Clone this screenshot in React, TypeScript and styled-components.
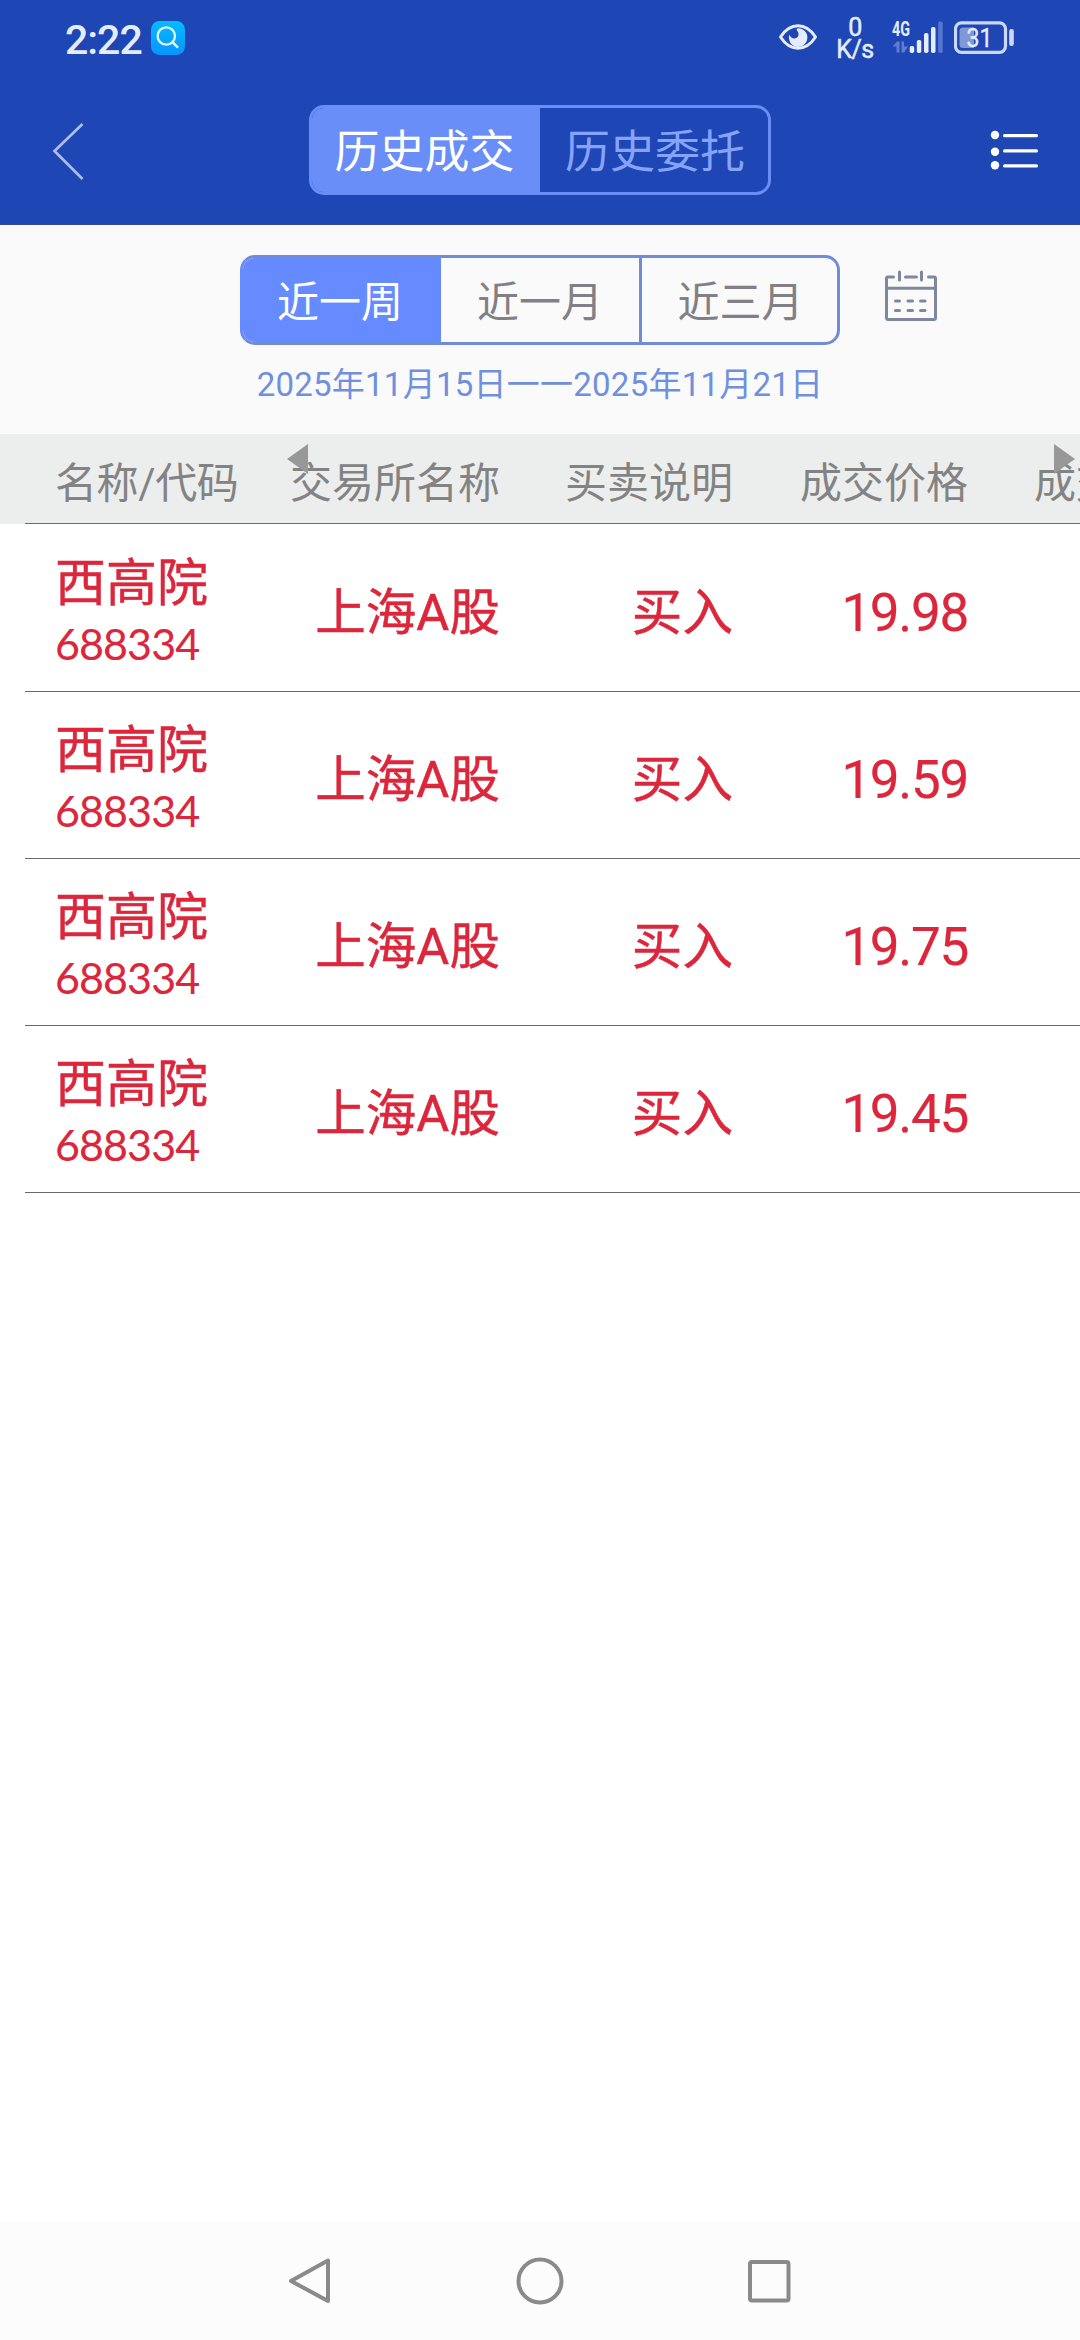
import React from "react";
import styled, { createGlobalStyle } from "styled-components";

const GlobalStyle = createGlobalStyle`
  *, *::before, *::after { box-sizing: border-box; }
  body {
    margin: 0;
    background: #fff;
    font-family: Roboto, "Noto Sans CJK SC", sans-serif;
  }
  button {
    margin: 0;
    padding: 0;
    border: 0;
    background: none;
    font: inherit;
  }
  svg { display: block; flex: none; }
`;

const Screen = styled.div`
  display: flex;
  flex-direction: column;
  width: 1080px;
  height: 2340px;
  overflow: hidden;
  background: #fff;
`;

const Top = styled.header`
  flex: none;
  height: 225px;
  background: #1e46b4;
  border-bottom: 1px solid #34499a;
`;

const StatusBar = styled.div`
  display: flex;
  justify-content: space-between;
  height: 75px;
  padding: 0 65px 0 65px;
  color: #e4ecfd;
`;

const StatusLeft = styled.div`
  display: flex;
  align-items: center;
  gap: 9px;
  padding-top: 1px;
`;

const Clock = styled.span`
  width: 77px;
  font-size: 41px;
  font-weight: 500;
  line-height: 48px;
  letter-spacing: -1px;
  padding-top: 3px;
  white-space: nowrap;
`;

const StatusRight = styled.div`
  display: flex;
  align-items: flex-start;
`;

const NetSpeed = styled.div`
  display: flex;
  flex-direction: column;
  align-items: center;
  width: 38px;
  margin: 17px 17px 0 18px;
  font-size: 25px;
  line-height: 22px;
  letter-spacing: -0.4px;
  -webkit-text-stroke: 0.5px #e4ecfd;
`;

const TitleBar = styled.div`
  display: flex;
  align-items: center;
  justify-content: space-between;
  height: 149px;
  padding: 1px 40px 0 52px;
`;

const BarIcon = styled.span`
  padding-top: 2px;
`;

const ModeSwitch = styled.div`
  display: grid;
  grid-template-columns: 228px 228px;
  width: 462px;
  height: 90px;
  margin-left: 4px;
  border: 3px solid #6a8ef7;
  border-radius: 15px;
  overflow: hidden;
`;

const Mode = styled.button<{ $active?: boolean }>`
  padding: ${(p) => (p.$active ? "0 3px 0 0" : "0 0 0 2px")};
  height: 84px;
  font-size: 45px;
  line-height: 90px;
  color: ${(p) => (p.$active ? "#fff" : "#86a3fb")};
  background: ${(p) => (p.$active ? "#6a8ef7" : "transparent")};
`;

const Filter = styled.section`
  display: flex;
  flex-direction: column;
  flex: none;
  height: 209px;
  padding-top: 30px;
  background: #fafafb;
`;

const FilterRow = styled.div`
  display: flex;
  align-items: flex-start;
  gap: 44px;
  padding-left: 240px;
`;

const Periods = styled.div`
  display: grid;
  grid-template-columns: repeat(3, 198px);
  width: 600px;
  height: 90px;
  border: 3px solid #708bd8;
  border-left-color: #668aff;
  border-radius: 15px;
  overflow: hidden;
`;

const Period = styled.button<{ $active?: boolean; $divider?: boolean }>`
  padding-right: ${(p) => (p.$active ? 4 : 0)}px;
  padding-left: ${(p) => (p.$divider ? 2 : 0)}px;
  font-size: 42px;
  line-height: 90px;
  height: 84px;
  color: ${(p) => (p.$active ? "#fff" : "#828084")};
  background: ${(p) => (p.$active ? "#668aff" : "transparent")};
  border-left: ${(p) => (p.$divider ? "3px solid #708bd8" : "0")};
`;

const CalendarSlot = styled.div`
  padding-top: 14px;
`;

const DateRange = styled.p`
  margin: 15px 0 0;
  font-size: 33px;
  line-height: 50px;
  letter-spacing: 0.25px;
  text-align: center;
  color: #7090de;
`;

const HeaderRow = styled.div`
  position: relative;
  display: grid;
  grid-template-columns: 200px 245px 233px 235px 1fr;
  flex: none;
  height: 90px;
  padding: 5px 0 0 55px;
  font-size: 42px;
  line-height: 90px;
  color: #838383;
  background: #eceeed;
  white-space: nowrap;
  overflow: hidden;
`;

const HeaderCell = styled.span<{ $right?: boolean }>`
  height: 85px;
  letter-spacing: ${(p) => (p.$right ? 0 : -0.4)}px;
  text-align: ${(p) => (p.$right ? "right" : "left")};
`;

const NextHeaderCell = styled(HeaderCell)`
  padding-left: 66px;
`;

const ScrollHint = styled.svg<{ $left: number }>`
  position: absolute;
  top: 10px;
  left: ${(p) => p.$left}px;
`;

const List = styled.main`
  position: relative;
  flex: 1;
  margin: -1px 0 0 25px;
  border-top: 1px solid #6c696e;
`;

const Row = styled.div<{ $first?: boolean }>`
  display: grid;
  grid-template-columns: 215px 230px 233px 235px;
  align-items: center;
  height: ${(p) => (p.$first ? 168 : 167)}px;
  padding-left: 30px;
  border-bottom: 1px solid #6c696e;
  color: #dc263b;
  -webkit-text-stroke: 0.5px #dc263b;
`;

const Security = styled.div`
  display: flex;
  flex-direction: column;
  padding-top: 9px;
`;

const Name = styled.span`
  font-size: 51px;
  line-height: 64px;
`;

const Code = styled.span`
  margin-top: -1px;
  font-family: Lato, Roboto, sans-serif;
  font-size: 43px;
  line-height: 58px;
  letter-spacing: -0.9px;
  -webkit-text-stroke-width: 0.1px;
`;

const Cell = styled.span<{ $price?: boolean }>`
  font-size: ${(p) => (p.$price ? 53 : 50.5)}px;
  line-height: 64px;
  letter-spacing: ${(p) => (p.$price ? -1.3 : 0.1)}px;
  padding-top: 10px;
  text-align: right;
  -webkit-text-stroke-width: ${(p) => (p.$price ? 0.2 : 0.5)}px;
`;

const NavBar = styled.nav`
  display: flex;
  align-items: center;
  justify-content: center;
  gap: 180px;
  flex: none;
  height: 118px;
  background: #fcfcfc;
`;

const SearchBadge = () => (
  <svg width="34" height="34" viewBox="0 0 34 34" fill="none">
    <defs>
      <linearGradient id="badge" x1="0" y1="0" x2="0" y2="1">
        <stop offset="0" stopColor="#05baff" />
        <stop offset="1" stopColor="#0895ff" />
      </linearGradient>
    </defs>
    <rect width="34" height="34" rx="8.5" fill="url(#badge)" />
    <circle cx="15.3" cy="15" r="8.7" stroke="#dcfbff" strokeWidth="2.3" />
    <path d="M21.3 21 27 26.6" stroke="#dcfbff" strokeWidth="2.5" />
  </svg>
);

const EyeIcon = () => (
  <svg width="40" height="75" viewBox="0 0 40 75" fill="none">
    <path
      d="M2.5 37C7 30 13 25.8 20 25.8S33 30 37.500 37C33 44 27 48.200 20 48.200S7 44 2.500 37Z"
      stroke="#e4ecfd"
      strokeWidth="3"
      strokeLinejoin="round"
    />
    <path
      d="M20 28.300A9.300 9.300 0 1 1 11.300 34.500C12.500 37.500 15 39 17.600 38.300C20.500 37.500 21.500 34 19.500 31.300C18.600 30 18 29 20 28.300Z"
      fill="#e4ecfd"
    />
  </svg>
);

const SignalIcon = () => (
  <svg width="52" height="75" viewBox="0 0 52 75">
    <text
      x="1"
      y="36"
      fontFamily="Roboto, sans-serif"
      fontSize="20"
      fontWeight="700"
      textLength="18"
      lengthAdjust="spacingAndGlyphs"
      fill="#e4ecfd"
    >
      4G
    </text>
    <path d="M1.500 46.500 6 41.500H8.500V52.500H5.500V46.500ZM10.500 41.500H13V46.500H17L13 52.500H10.500Z" fill="#607cce" />
    <g fill="#e4ecfd">
      <rect x="18.700" y="46" width="4.500" height="7" rx="1.800" />
      <rect x="25.800" y="40" width="4.500" height="13" rx="1.800" />
      <rect x="33" y="33" width="4.500" height="20" rx="1.800" />
      <rect x="40" y="27" width="4.500" height="26" rx="1.800" />
    </g>
    <rect x="47.200" y="21.500" width="4.500" height="31.500" rx="1.800" fill="#5675cf" />
  </svg>
);

const BatterySlot = styled.div`
  margin-left: 11px;
`;

const BatteryIcon = () => (
  <svg width="61" height="75" viewBox="0 0 61 75" fill="none">
    <rect x="1.500" y="22.800" width="50" height="29.500" rx="6" stroke="#ccd8fa" strokeWidth="3.200" />
    <path d="M9 27.500H20V48H9Q5.500 48 5.500 44.500V31Q5.500 27.500 9 27.500Z" fill="#8097d8" />
    <rect x="55.200" y="29" width="4.600" height="17" rx="2" fill="#ccd8fa" />
    <text
      x="25.500"
      y="46.600"
      textAnchor="middle"
      fontFamily="Roboto, sans-serif"
      fontSize="25"
      fontWeight="400"
      textLength="26"
      lengthAdjust="spacingAndGlyphs"
      fill="#e4ecfd"
      stroke="#e4ecfd"
      strokeWidth="0.4"
    >
      31
    </text>
  </svg>
);

const BackIcon = () => (
  <svg width="34" height="60" viewBox="0 0 34 60" fill="none">
    <path d="M30.500 3 2.500 30 30.500 58" stroke="#aebde9" strokeWidth="2.700" />
  </svg>
);

const MenuIcon = () => (
  <svg width="50" height="42" viewBox="0 0 50 42">
    <g fill="#fff">
      <circle cx="5" cy="5" r="4.200" />
      <circle cx="5" cy="21.700" r="4.200" />
      <circle cx="5" cy="35.200" r="4.200" />
      <rect x="13" y="4" width="35" height="3.200" rx="1.500" />
      <rect x="13" y="19.200" width="35" height="3.200" rx="1.500" />
      <rect x="13" y="34.300" width="35" height="3.200" rx="1.500" />
    </g>
  </svg>
);

const CalendarIcon = () => (
  <svg width="54" height="54" viewBox="0 0 54 54" fill="none" stroke="#7e879d" strokeWidth="3" strokeLinecap="round">
    <path d="M9.500 8H4Q2.500 8 2.500 9.500V48.500Q2.500 50.500 4 50.500H50Q51.500 50.500 51.500 48.500V9.500Q51.500 8 50 8H44.500" />
    <path d="M21.500 8H32.500M15.500 3V11M37.500 3V11M2.500 19.300H51.500" />
    <path d="M11.500 32H15.500M24 32H28.500M36.500 32H41M11.500 41.500H15.500M24 41.500H28.500M36.500 41.500H41" />
  </svg>
);

interface Deal {
  name: string;
  code: string;
  market: string;
  side: string;
  price: string;
}

const deals: Deal[] = ["19.98", "19.59", "19.75", "19.45"].map((price) => ({
  name: "西高院",
  code: "688334",
  market: "上海A股",
  side: "买入",
  price,
}));

export default function App() {
  return (
    <Screen>
      <GlobalStyle />
      <Top>
        <StatusBar>
          <StatusLeft>
            <Clock>2:22</Clock>
            <SearchBadge />
          </StatusLeft>
          <StatusRight>
            <EyeIcon />
            <NetSpeed>
              <span>0</span>
              <span>K/s</span>
            </NetSpeed>
            <SignalIcon />
            <BatterySlot>
              <BatteryIcon />
            </BatterySlot>
          </StatusRight>
        </StatusBar>
        <TitleBar>
          <BarIcon>
            <BackIcon />
          </BarIcon>
          <ModeSwitch>
            <Mode $active>历史成交</Mode>
            <Mode>历史委托</Mode>
          </ModeSwitch>
          <BarIcon>
            <MenuIcon />
          </BarIcon>
        </TitleBar>
      </Top>
      <Filter>
        <FilterRow>
          <Periods>
            <Period $active>近一周</Period>
            <Period>近一月</Period>
            <Period $divider>近三月</Period>
          </Periods>
          <CalendarSlot>
            <CalendarIcon />
          </CalendarSlot>
        </FilterRow>
        <DateRange>2025年11月15日一一2025年11月21日</DateRange>
      </Filter>
      <HeaderRow>
        <HeaderCell>名称/代码</HeaderCell>
        <HeaderCell $right>交易所名称</HeaderCell>
        <HeaderCell $right>买卖说明</HeaderCell>
        <HeaderCell $right>成交价格</HeaderCell>
        <NextHeaderCell>成交</NextHeaderCell>
        <ScrollHint $left={287} width="21" height="30">
          <path d="M21 0V30L0 15Z" fill="#989898" />
        </ScrollHint>
        <ScrollHint $left={1054} width="21" height="30">
          <path d="M0 0V30L21 15Z" fill="#989898" />
        </ScrollHint>
      </HeaderRow>
      <List>
        {deals.map((d, i) => (
          <Row key={d.price} $first={i === 0}>
            <Security>
              <Name>{d.name}</Name>
              <Code>{d.code}</Code>
            </Security>
            <Cell>{d.market}</Cell>
            <Cell>{d.side}</Cell>
            <Cell $price>{d.price}</Cell>
          </Row>
        ))}
      </List>
      <NavBar>
        <svg width="50" height="50" viewBox="0 0 50 50" fill="none" stroke="#8a8a8a" strokeWidth="4" strokeLinejoin="round">
          <path d="M43 4.500V45L6 25Z" />
        </svg>
        <svg width="50" height="50" viewBox="0 0 50 50" fill="none" stroke="#8a8a8a" strokeWidth="4">
          <circle cx="25" cy="25" r="21.500" />
        </svg>
        <svg width="50" height="50" viewBox="0 0 50 50" fill="none" stroke="#8a8a8a" strokeWidth="4">
          <rect x="5" y="6" width="38.500" height="38.500" rx="2" />
        </svg>
      </NavBar>
    </Screen>
  );
}
